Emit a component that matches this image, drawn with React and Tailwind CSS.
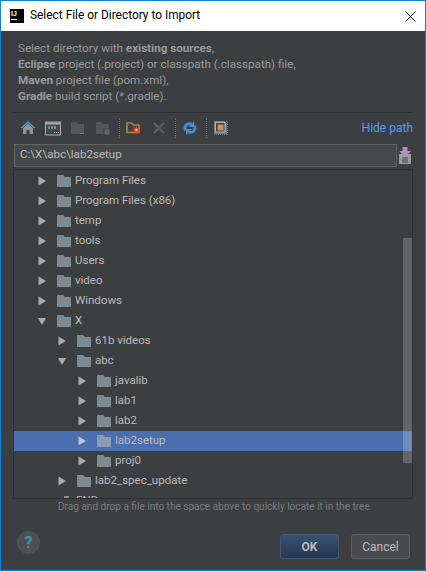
const font = { fontFamily: 'Roboto, "Noto Sans", sans-serif' };

const rows = [
  ["Program Files", 0, false],
  ["Program Files (x86)", 0, false],
  ["temp", 0, false],
  ["tools", 0, false],
  ["Users", 0, false],
  ["video", 0, false],
  ["Windows", 0, false],
  ["X", 0, true],
  ["61b videos", 1, false],
  ["abc", 1, true],
  ["javalib", 2, false],
  ["lab1", 2, false],
  ["lab2", 2, false],
  ["lab2setup", 2, false, true],
  ["proj0", 2, false],
  ["lab2_spec_update", 1, false],
];

const indent = ["pl-[23px]", "pl-[43px]", "pl-[63px]"];

function Arrow({ open, selected }) {
  const c = selected ? "#b9c4d6" : "#a9abac";
  return (
    <svg width="10" height="10" viewBox="0 0 10 10" className="shrink-0">
      {open ? <path d="M1 2h8L5 9z" fill={c} /> : <path d="M1.5 0.5v9L9 5z" fill={c} />}
    </svg>
  );
}

function Folder({ selected }) {
  return (
    <svg width="14" height="12" viewBox="0 0 14 12" className="shrink-0">
      <path d="M0 0h6l2 2h6v10H0z" fill={selected ? "#8a9db8" : "#7e8a91"} />
    </svg>
  );
}

function Row({ name, depth, open, selected }) {
  return (
    <div className={`flex h-5 items-center ${indent[depth]} ${selected ? "bg-[#4b6eaf]" : ""}`}>
      <Arrow open={open} selected={selected} />
      <div className="ml-[10px] flex items-center">
        <Folder selected={selected} />
      </div>
      <span className="ml-1 text-[11.5px] text-[#bbbbbb]">{name}</span>
    </div>
  );
}

function Sep() {
  return <div className="ml-[3px] mr-[2px] h-[20px] border-l border-dotted border-[#6b6e70]" />;
}

function ToolIcon({ children }) {
  return (
    <svg width="16" height="16" viewBox="0 0 16 16" className="mx-[4.5px] shrink-0">
      {children}
    </svg>
  );
}

export default function App() {
  return (
    <div style={font} className="flex h-[571px] w-[426px] flex-col overflow-hidden border border-[#0a84d8] bg-[#3c3f41]">
      <div className="flex h-[30px] shrink-0 items-center bg-white pl-[9px] pr-[9px]">
        <div className="flex h-[14px] w-[14px] flex-col bg-black px-[1px] text-white">
          <span className="text-[7px] font-bold leading-[9px]" style={{ fontFamily: '"Liberation Sans", sans-serif' }}>IJ</span>
          <div className="mt-[1px] h-[1px] w-[6px] bg-white" />
        </div>
        <span className="ml-[6px] text-[11.9px] text-black">Select File or Directory to Import</span>
        <svg width="11" height="11" viewBox="0 0 11 11" className="ml-auto">
          <path d="M0.5 0.5l10 10M10.5 0.5l-10 10" stroke="#111" strokeWidth="1" fill="none" />
        </svg>
      </div>

      <div className="flex min-h-0 flex-1 flex-col pl-[12px] pr-[12px]">
        <div className="pl-[5px] pt-[9px] text-[11.65px] leading-[16px] text-[#999b9c]">
          <div>Select directory with <b>existing sources</b>,</div>
          <div><b>Eclipse</b> project (.project) or classpath (.classpath) file,</div>
          <div><b>Maven</b> project file (pom.xml),</div>
          <div><b>Gradle</b> build script (*.gradle).</div>
        </div>

        <div className="mt-[8px] h-[1px] bg-[#2e3031]" />

        <div className="flex h-[30px] items-center pl-[2.5px]">
          <ToolIcon>
            <path d="M8 1L0.5 8h1.8L8 3l5.7 5h1.8z" fill="#3fa0d8" />
            <path d="M3 8l5-4.2L13 8v6H9.5v-4h-3v4H3z" fill="#8a979e" />
          </ToolIcon>
          <ToolIcon>
            <rect x="0.5" y="2" width="15" height="13" fill="#45484a" stroke="#a3afb8" />
            <rect x="1" y="2.5" width="14" height="2" fill="#a3afb8" />
            <rect x="3" y="6" width="2" height="3" fill="#5a9e5a" />
            <rect x="6" y="6" width="2" height="3" fill="#5b9bd5" />
            <rect x="9" y="6" width="2" height="3" fill="#d9703a" />
            <path d="M9 12.5h1m1 0h1m1 0h1" stroke="#a3afb8" />
          </ToolIcon>
          <ToolIcon>
            <path d="M1 2h5l2 2h6v10H1z" fill="#55585a" />
            <path d="M10 13h4v1h-4z" fill="#7a7d7f" />
          </ToolIcon>
          <ToolIcon>
            <path d="M1 2h5l2 2h6v10H1z" fill="#55585a" />
            <rect x="9" y="9" width="6" height="6" fill="#66696b" stroke="#3c3f41" />
          </ToolIcon>
          <Sep />
          <ToolIcon>
            <path d="M1 3h4.5l2 2H13v7.5H1z" fill="#45403a" stroke="#a9854f" strokeWidth="1.6" />
            <path d="M10.5 6l0.9 2 2-0.9-0.9 2 2.2 0.9-2.2 0.9 0.9 2-2-0.9-0.9 2.2-0.9-2.2-2 0.9 0.9-2-2.2-0.9 2.2-0.9-0.9-2 2 0.9z" fill="#e8403a" />
            <circle cx="10.5" cy="10" r="1.2" fill="#f2c14e" />
          </ToolIcon>
          <ToolIcon>
            <path d="M3 3l10 10M13 3L3 13" stroke="#5d6062" strokeWidth="2.4" fill="none" />
          </ToolIcon>
          <Sep />
          <ToolIcon>
            <path d="M2.5 11C0 7 3 2 8 2.3c1 0 1.7.3 2.3.7L12 1v6H6l2-2C5.5 4.5 3.5 7.5 4.8 10z" fill="#3f8fcc" />
            <path d="M13.5 5C16 9 13 14 8 13.7c-1 0-1.7-.3-2.3-.7L4 15V9h6l-2 2c2.5.5 4.5-2.5 3.2-5z" fill="#3f8fcc" />
          </ToolIcon>
          <Sep />
          <ToolIcon>
            <rect x="1" y="1" width="14" height="14" fill="#77797a" />
            <path d="M12 1h1v1h-1zM14 1h1v1h-1zM13 2h1v1h-1zM15 3h-1v1h1zM14 5h1v1h-1zM14 7h1v1h-1zM14 9h1v1h-1zM14 11h1v1h-1zM14 13h1v1h-1zM12 14h1v1h-1zM10 14h1v1h-1zM8 14h1v1H8zM6 14h1v1H6zM4 14h1v1H4zM2 14h1v1H2z" fill="#3c3f41" />
            <rect x="2.5" y="2.5" width="9.5" height="9.5" fill="#3c3f41" stroke="#b5b8b9" />
            <rect x="4.5" y="4.5" width="6" height="6" fill="#c8964e" />
          </ToolIcon>
          <span className="ml-auto text-[12px] text-[#589df6]">Hide path</span>
        </div>

        <div className="flex h-[24px] items-center pl-[1px]">
          <div className="flex h-[23px] w-[383px] items-center border border-[#646464] bg-[#45494a] pl-[5px] text-[11.6px] text-[#bbbbbb]">
            C:\X\abc\lab2setup
          </div>
          <svg width="12" height="17" viewBox="0 0 12 17" className="ml-[2px]">
            <rect x="0" y="7" width="12" height="10" fill="#9b9ea0" />
            <path d="M3 11h6M3 13h6M3 15h6" stroke="#45494a" />
            <path d="M3.5 0h5v4H12L6 10 0 4h3.5z" fill="#b58cc4" />
          </svg>
        </div>

        <div className="relative mt-[2px] h-[330px] shrink-0 overflow-hidden border border-[#2f3132] pt-[1px]">
          {rows.map((r) => (
            <Row key={r[0]} name={r[0]} depth={r[1]} open={r[2]} selected={r[3]} />
          ))}
          <div className="flex h-5 items-center pl-[44px]">
            <svg width="11" height="10" viewBox="0 0 11 10" className="shrink-0">
              <path d="M0 6h11v4H0zM6 0h5v6H6zM3 3h3v3H3z" fill="#8a8d8f" />
            </svg>
            <span className="ml-[7px] text-[11.5px] text-[#bbbbbb]">END</span>
          </div>
          <div className="absolute right-0 top-[68px] h-[225px] w-[9px] bg-[#ffffff]/20" />
        </div>

        <div className="pl-[45px] pt-[1px] text-[10.05px] leading-[14px] text-[#7a7d7f]">
          Drag and drop a file into the space above to quickly locate it in the tree
        </div>

        <div className="mt-[20px] flex items-start pl-[4px] pr-[3px]">
          <div className="-mt-[3px] flex h-[23px] w-[23px] items-center justify-center rounded-full border border-[#54585a] bg-[#4c5052] text-[16px] font-bold text-[#3f94c6]">
            ?
          </div>
          <div className="ml-auto flex h-[25px] w-[59px] items-center justify-center rounded-[3px] border border-[#46586f] bg-gradient-to-b from-[#385273] to-[#243850] text-[12px] font-bold text-[#bbbbbb]">
            OK
          </div>
          <div className="ml-[12px] flex h-[25px] w-[59px] items-center justify-center rounded-[3px] border border-[#5e6060] bg-[#494c4e] text-[12px] text-[#bbbbbb]">
            Cancel
          </div>
        </div>
      </div>
    </div>
  );
}
